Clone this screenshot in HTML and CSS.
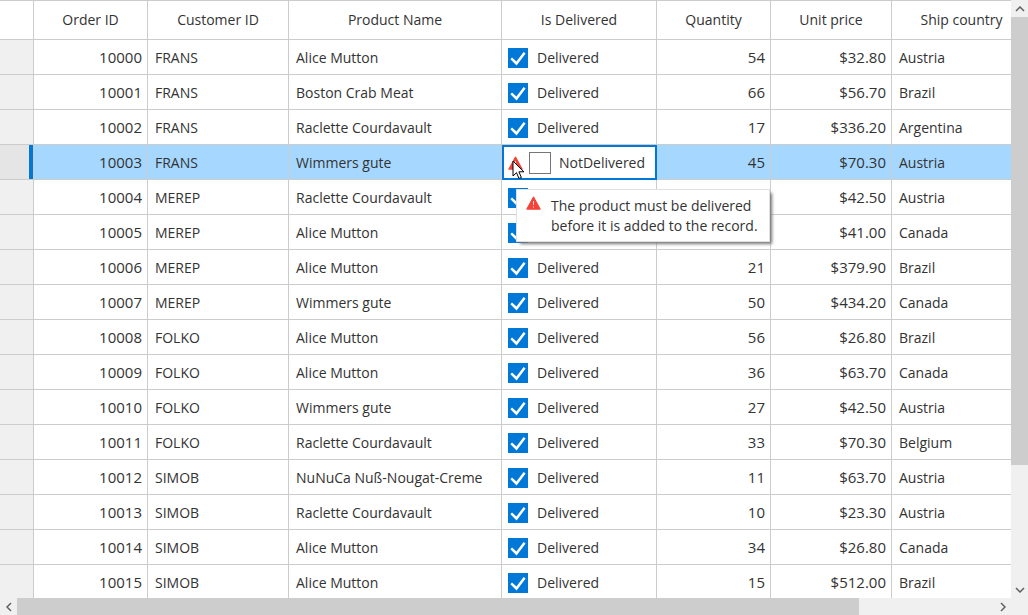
FILE: index.html
```html
<!DOCTYPE html>
<html lang="en">
<head>
<meta charset="utf-8">
<title>Orders</title>
<link rel="stylesheet" href="styles.css">
</head>
<body>
<main class="viewer">
  <div class="grid-pane">
    <table class="orders">
      <colgroup>
        <col class="c-head"><col class="c-order"><col class="c-customer"><col class="c-product">
        <col class="c-delivered"><col class="c-quantity"><col class="c-price"><col class="c-country">
      </colgroup>
      <thead>
        <tr><th></th><th>Order ID</th><th>Customer ID</th><th>Product Name</th><th>Is Delivered</th><th>Quantity</th><th>Unit price</th><th>Ship country</th></tr>
      </thead>
      <tbody id="rows"></tbody>
    </table>
  </div>
  <div class="scroll scroll-v">
    <button class="arrow" type="button" aria-label="Scroll up"><svg width="10" height="6" viewBox="0 0 10 6"><path d="M1 5l4-4 4 4"/></svg></button>
    <div class="track"><div class="thumb"></div></div>
    <button class="arrow" type="button" aria-label="Scroll down"><svg width="10" height="6" viewBox="0 0 10 6"><path d="M1 1l4 4 4-4"/></svg></button>
  </div>
  <div class="scroll scroll-h">
    <button class="arrow" type="button" aria-label="Scroll left"><svg width="6" height="10" viewBox="0 0 6 10"><path d="M5 1L1 5l4 4"/></svg></button>
    <div class="track"><div class="thumb"></div></div>
    <button class="arrow" type="button" aria-label="Scroll right"><svg width="6" height="10" viewBox="0 0 6 10"><path d="M1 1l4 4-4 4"/></svg></button>
  </div>
  <div class="corner"></div>
</main>
<template id="editor">
  <div class="editor">
    <svg class="warn" width="15" height="14" viewBox="0 0 15 14"><path class="warn-body" d="M7.500.8L14.300 13.200H.7z"/><path class="warn-mark" d="M7.500 5v4M7.500 10.300v1.300"/></svg>
    <input class="check" type="checkbox" id="d3"><label for="d3">NotDelivered</label>
    <svg class="pointer" width="13" height="20" viewBox="0 0 13 20"><path d="M1 1v15l3.500-3.300L7 18.500l2.400-1-2.500-5.700h5z"/></svg>
    <div class="tip" role="tooltip">
      <svg class="warn" width="15" height="14" viewBox="0 0 15 14"><path class="warn-body" d="M7.500.8L14.300 13.200H.7z"/><path class="warn-mark" d="M7.500 5v4M7.500 10.300v1.300"/></svg>
      <span>The product must be delivered<br>before it is added to the record.</span>
    </div>
  </div>
</template>
<script src="script.js"></script>
</body>
</html>
```
FILE: styles.css
```css
* { box-sizing: border-box; }
body {
  margin: 0;
  background: #fff;
  color: #333;
  font: 14px/20px "Open Sans", "Noto Sans", sans-serif;
}
.viewer {
  display: grid;
  grid-template: minmax(0, 1fr) 17px / minmax(0, 1fr) 17px;
  height: 100vh;
}
.grid-pane { overflow: hidden; }
.orders {
  width: 1032px;
  table-layout: fixed;
  border-collapse: separate;
  border-spacing: 0;
}
.c-head { width: 34px; }
.c-order, .c-quantity { width: 114px; }
.c-customer { width: 141px; }
.c-product { width: 213px; }
.c-delivered { width: 155px; }
.c-price { width: 121px; }
.c-country { width: 140px; }
th, td {
  padding: 2px 5px 0 7px;
  border: solid #ccc;
  border-width: 0 1px 1px 0;
  font-weight: 400;
  text-align: left;
  white-space: nowrap;
}
th {
  height: 40px;
  padding: 0 2px;
  border-top-width: 1px;
  text-align: center;
}
td { height: 35px; }
.number { padding-top: 0; font-size: 15px; text-align: right; }
.row-head { background: #f0f0f0; }
.choice-cell { padding-left: 6px; }
.choice { display: flex; align-items: center; gap: 9px; }
.check {
  appearance: none;
  flex: none;
  width: 20px;
  height: 20px;
  margin: 0;
  border: 1px solid #767676;
  background: #fff;
}
.check:checked { border: 0; background: #0078d7; }
.check:checked::before {
  content: "";
  display: block;
  height: 20px;
  background: #fff;
  clip-path: polygon(12% 56%, 20% 47%, 42% 68%, 78% 20%, 88% 28%, 43% 87%);
}
.selected td { background: #a6d8ff; }
.selected .row-head {
  background: #e5e5e5;
  box-shadow: inset -4px 0 #0078d7;
}
.selected .edit-cell { position: relative; padding: 0; }
.editor {
  position: absolute;
  inset: 0 -1px -1px 0;
  display: flex;
  align-items: center;
  padding: 0 4px;
  border: 2px solid #0078d7;
  background: #fff;
}
.editor .check {
  width: 22px;
  height: 22px;
  margin: 0 8px 0 6px;
}
.warn { flex: none; }
.warn-body { fill: #f44336; stroke: #f44336; stroke-linejoin: round; }
.warn-mark { fill: none; stroke: #fff; opacity: .75; }
.pointer { position: absolute; left: 8px; top: 13px; z-index: 3; }
.pointer path { fill: #fff; stroke: #000; }
.tip {
  position: absolute;
  left: 12px;
  top: 42px;
  z-index: 2;
  display: flex;
  gap: 10px;
  width: 254px;
  padding: 6px 9px 5px;
  border: 1px solid #e0e0e0;
  background: #fff;
  box-shadow: 3px 3px 3px -1px #777;
}
.scroll { display: flex; background: #f0f0f0; }
.scroll-v { flex-direction: column; }
.arrow {
  display: grid;
  place-items: center;
  flex: none;
  width: 17px;
  height: 17px;
  padding: 0;
  border: 0;
  background: #f0f0f0;
}
.arrow path { fill: none; stroke: #606060; stroke-width: 1.500; }
.track { flex: 1; }
.thumb { background: #cdcdcd; }
.scroll-v .thumb { height: 79.5%; }
.scroll-h .thumb { width: 86.2%; height: 100%; }
.corner { background: #f0f0f0; }
```
FILE: script.js
```js
const orders = [
  ["FRANS", "Alice Mutton", 54, "$32.80", "Austria"],
  ["FRANS", "Boston Crab Meat", 66, "$56.70", "Brazil"],
  ["FRANS", "Raclette Courdavault", 17, "$336.20", "Argentina"],
  ["FRANS", "Wimmers gute", 45, "$70.30", "Austria"],
  ["MEREP", "Raclette Courdavault", null, "$42.50", "Austria"],
  ["MEREP", "Alice Mutton", null, "$41.00", "Canada"],
  ["MEREP", "Alice Mutton", 21, "$379.90", "Brazil"],
  ["MEREP", "Wimmers gute", 50, "$434.20", "Canada"],
  ["FOLKO", "Alice Mutton", 56, "$26.80", "Brazil"],
  ["FOLKO", "Alice Mutton", 36, "$63.70", "Canada"],
  ["FOLKO", "Wimmers gute", 27, "$42.50", "Austria"],
  ["FOLKO", "Raclette Courdavault", 33, "$70.30", "Belgium"],
  ["SIMOB", "NuNuCa Nuß-Nougat-Creme", 11, "$63.70", "Austria"],
  ["SIMOB", "Raclette Courdavault", 10, "$23.30", "Austria"],
  ["SIMOB", "Alice Mutton", 34, "$26.80", "Canada"],
  ["SIMOB", "Alice Mutton", 15, "$512.00", "Brazil"]
];
const editing = 3;

// Rows under the open tooltip carry an unlabelled box.
function deliveredCell(i) {
  if (i === editing) {
    return `<td class="edit-cell">${document.getElementById("editor").innerHTML}</td>`;
  }
  const covered = i > editing && i <= editing + 2;
  const box = covered
    ? `<input class="check" type="checkbox" aria-label="Delivered" checked>`
    : `<input class="check" type="checkbox" id="d${i}" checked><label for="d${i}">Delivered</label>`;
  return `<td class="choice-cell"><div class="choice">${box}</div></td>`;
}

document.getElementById("rows").innerHTML = orders.map(([customer, product, quantity, price, country], i) =>
  `<tr class="${i === editing ? "selected" : ""}"><td class="row-head"></td><td class="number">${10000 + i}</td><td>${customer}</td><td>${product}</td>${deliveredCell(i)}<td class="number">${quantity ?? ""}</td><td class="number">${price}</td><td>${country}</td></tr>`
).join("");
```
